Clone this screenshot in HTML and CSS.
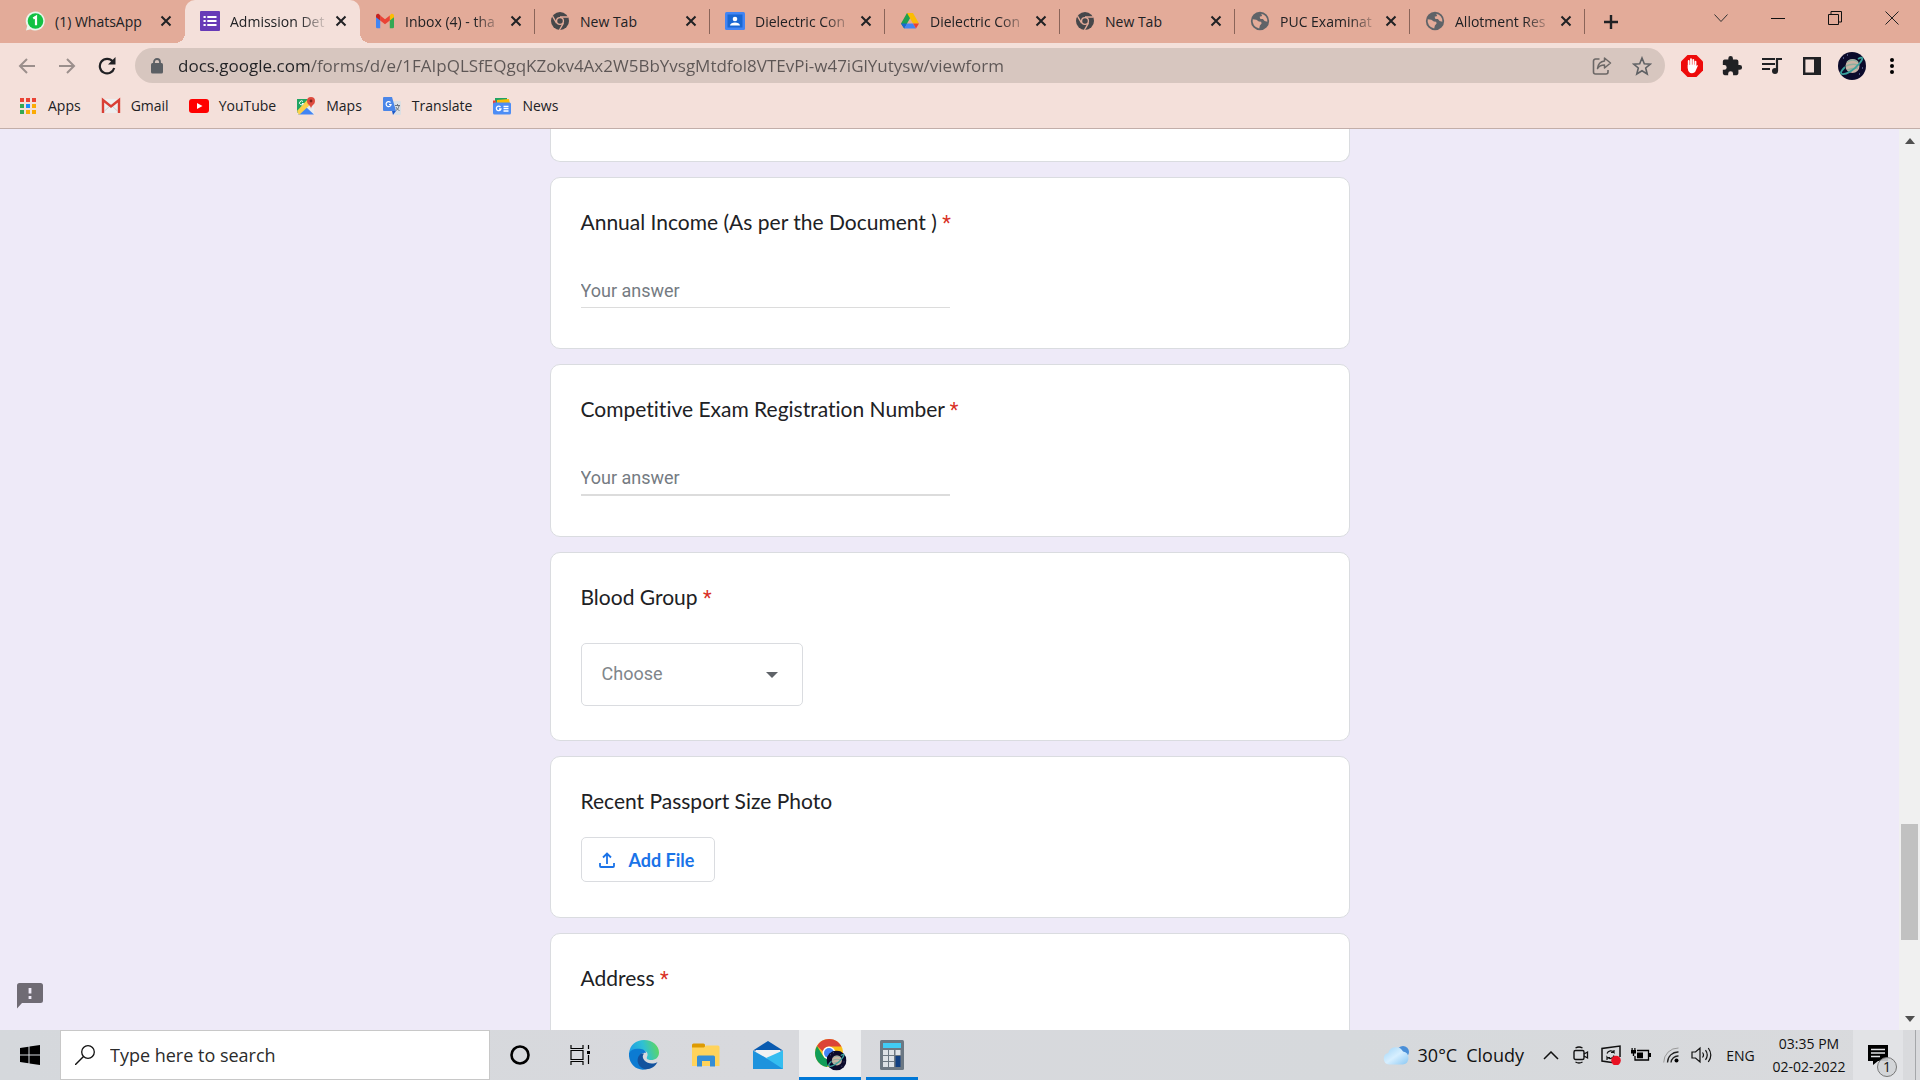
FILE: index.html
```
<!DOCTYPE html>
<html lang="en">
<head>
<meta charset="utf-8">
<title>Admission Details</title>
<meta name="viewport" content="width=device-width, initial-scale=1">
<link rel="stylesheet" href="styles.css">
</head>
<body>
<svg class="defs" aria-hidden="true">
  <defs>
    <symbol id="close" viewBox="0 0 12 12"><path d="M1.500 1.500l9 9M10.500 1.500l-9 9" stroke="#202124" stroke-width="2" fill="none"/></symbol>
    <symbol id="chrome-grey" viewBox="0 0 20 20"><circle cx="10" cy="10" r="10" fill="#46474a"/><circle cx="10" cy="10" r="3.800" fill="none" stroke="#e3ab99" stroke-width="1.500"/><path d="M10 5.500h9M6.200 12.300L1.700 4.600M13.800 12.300L9.400 20" stroke="#e3ab99" stroke-width="1.500"/></symbol>
    <symbol id="globe" viewBox="0 0 24 24"><path fill="#5f6368" d="M12 1a11 11 0 1 0 0 22 11 11 0 0 0 0-22zm-1 19.900A9 9 0 0 1 3.300 10l4.300 0.500 3 2 2.800 0.500 0.500 2-2 2.500zM20.800 13l-3.300-1-2-2.500-3 0-1-2.500 3-1-1-2.800a9 9 0 0 1 7.300 9.800z"/></symbol>
    <symbol id="planet" viewBox="0 0 28 28"><circle cx="14" cy="14" r="14" fill="#0b0a2b"/><circle cx="14.500" cy="14" r="7" fill="#c9b3a4"/><path d="M9 10q6-4 11 0M8 14q6-3 12-1M9 18q6-2 11-2" stroke="#8fae9f" stroke-width="1.500" fill="none"/><path d="M20 7c5-3 6-1 1 5s-13 11-17 10c-2-1-1-3 3-7" fill="none" stroke="#39a09c" stroke-width="1.800"/><path d="M5 6h1M21 22h1M9 3h1M24 16h1" stroke="#8b9bd0"/></symbol>
  </defs>
</svg>

<header class="browser">
  <div class="tabstrip">
    <div class="tabs" role="tablist">
      <div class="tab tab--plain" role="tab">
        <svg class="favicon" viewBox="0 0 20 20"><path d="M1 19.500L2.200 15A9.500 9.500 0 1 1 5.500 18.200z" fill="#e8f7ec"/><circle cx="10.500" cy="10" r="7.800" fill="#12c143"/><path d="M8.300 7.500l2.700-1.800v8.600" stroke="#fff" stroke-width="2.200" fill="none"/></svg>
        <span class="tab-title">(1) WhatsApp</span><button class="tab-close" aria-label="Close tab"><svg><use href="#close"/></svg></button>
      </div>
      <div class="tab tab--active" role="tab" aria-selected="true">
        <svg class="favicon" viewBox="0 0 20 20"><rect width="20" height="20" rx="1" fill="#673ab7"/><path d="M3.500 6h2.200M7.300 6h9.200M3.500 10h2.200M7.300 10h9.200M3.500 14h2.200M7.300 14h9.200" stroke="#fff" stroke-width="2"/></svg>
        <span class="tab-title">Admission Det</span><button class="tab-close" aria-label="Close tab"><svg><use href="#close"/></svg></button>
      </div>
      <div class="tab" role="tab">
        <svg class="favicon" viewBox="0 0 20 20"><path d="M1 5.500v10.500q0 1.300 1.300 1.300h2.900V8.500z" fill="#4285f4"/><path d="M14.800 8.500v8.800h2.900q1.300 0 1.300-1.300V5.500z" fill="#34a853"/><path d="M14.800 4.500v5L19 6.300V4.800c0-1.800-2-2.500-3.200-1.500z" fill="#fbbc04"/><path d="M5.200 9.500v-5L10 8.200l4.800-3.700v5L10 13.200z" fill="#ea4335"/><path d="M1 4.800v1.500l4.200 3.200v-5L4.200 3.300C3 2.300 1 3 1 4.800z" fill="#c5221f"/></svg>
        <span class="tab-title">Inbox (4) - tha</span><button class="tab-close" aria-label="Close tab"><svg><use href="#close"/></svg></button>
      </div>
      <div class="tab tab--plain" role="tab">
        <svg class="favicon favicon--small"><use href="#chrome-grey"/></svg>
        <span class="tab-title">New Tab</span><button class="tab-close" aria-label="Close tab"><svg><use href="#close"/></svg></button>
      </div>
      <div class="tab" role="tab">
        <svg class="favicon" viewBox="0 0 20 20"><rect y="1" width="20" height="18" rx="1.500" fill="#4285f4"/><rect x="2.500" y="3.500" width="15" height="13" fill="#1a67d2"/><circle cx="10" cy="8" r="2.300" fill="#fff"/><path d="M5 14.500c0-4 10-4 10 0z" fill="#fff"/></svg>
        <span class="tab-title">Dielectric Con</span><button class="tab-close" aria-label="Close tab"><svg><use href="#close"/></svg></button>
      </div>
      <div class="tab" role="tab">
        <svg class="favicon" viewBox="0 0 20 20"><path d="M7 2h6L10 7.200 4.200 17.500 1 12.500z" fill="#1ea04f"/><path d="M7 2h6l6 10.500h-6z" fill="#fbbc04"/><path d="M1 12.500h6.200l-3 5z" fill="#1967d2"/><path d="M7.200 12.500h5.800l3 5H4.200z" fill="#4285f4"/><path d="M13 12.500h6l-3 5z" fill="#ea4335"/></svg>
        <span class="tab-title">Dielectric Con</span><button class="tab-close" aria-label="Close tab"><svg><use href="#close"/></svg></button>
      </div>
      <div class="tab tab--plain" role="tab">
        <svg class="favicon favicon--small"><use href="#chrome-grey"/></svg>
        <span class="tab-title">New Tab</span><button class="tab-close" aria-label="Close tab"><svg><use href="#close"/></svg></button>
      </div>
      <div class="tab" role="tab">
        <svg class="favicon"><use href="#globe"/></svg>
        <span class="tab-title">PUC Examinat</span><button class="tab-close" aria-label="Close tab"><svg><use href="#close"/></svg></button>
      </div>
      <div class="tab" role="tab">
        <svg class="favicon"><use href="#globe"/></svg>
        <span class="tab-title">Allotment Res</span><button class="tab-close" aria-label="Close tab"><svg><use href="#close"/></svg></button>
      </div>
    </div>
    <button class="new-tab" aria-label="New tab"><svg width="16" height="16" viewBox="0 0 16 16"><path d="M8 1v14M1 8h14" stroke="#202124" stroke-width="2.400"/></svg></button>
    <div class="window-controls">
      <button aria-label="Search tabs"><svg width="14" height="14" viewBox="0 0 14 14"><path d="M.5 3.500L7 10.500l6.500-7" fill="none" stroke="#333"/></svg></button>
      <button aria-label="Minimize"><svg width="14" height="14" viewBox="0 0 14 14"><path d="M0 7.500h14" stroke="#111"/></svg></button>
      <button aria-label="Restore"><svg width="14" height="14" viewBox="0 0 14 14"><path d="M.5 3.500h10v10h-10zM3 3V.5h10.500v10.500H11" fill="none" stroke="#111"/></svg></button>
      <button aria-label="Close"><svg width="14" height="14" viewBox="0 0 14 14"><path d="M.5.500l13 13M13.500.500l-13 13" stroke="#222"/></svg></button>
    </div>
  </div>

  <div class="toolbar">
    <button class="tool" aria-label="Back"><svg width="18" height="18" viewBox="0 0 18 18"><path d="M17 9H2M9 2L2 9l7 7" fill="none" stroke="#9b8f8c" stroke-width="2"/></svg></button>
    <button class="tool" aria-label="Forward"><svg width="18" height="18" viewBox="0 0 18 18"><path d="M1 9h15M9 2l7 7-7 7" fill="none" stroke="#9b8f8c" stroke-width="2"/></svg></button>
    <button class="tool" aria-label="Reload"><svg width="18" height="18" viewBox="0 0 18 18"><path d="M14.800 4.500A7.300 7.300 0 1 0 16.200 11" fill="none" stroke="#202124" stroke-width="2.200"/><path d="M17.500 0v7.500H10z" fill="#202124"/></svg></button>
    <div class="omnibox">
      <svg class="lock" width="12" height="16" viewBox="0 0 12 16"><rect y="5" width="12" height="10.500" rx="1.500" fill="#5b5f64"/><path d="M3 6V4a3 3 0 0 1 6 0v2" fill="none" stroke="#5b5f64" stroke-width="1.800"/></svg>
      <input class="url" type="text" aria-label="Address and search bar" value="docs.google.com/forms/d/e/1FAIpQLSfEQgqKZokv4Ax2W5BbYvsgMtdfol8VTEvPi-w47iGlYutysw/viewform">
      <button class="tool" aria-label="Share this page"><svg width="20" height="18" viewBox="0 0 20 18"><path d="M7.500 2H3.500a2 2 0 0 0-2 2v11a2 2 0 0 0 2 2h10.500a2 2 0 0 0 2-2v-2" fill="none" stroke="#6b6766" stroke-width="1.600"/><path d="M12.500 1l6 5-6 5V8C9 8 7 9 5.500 11.500 6 7 8.500 4.500 12.500 4z" fill="none" stroke="#6b6766" stroke-width="1.500" stroke-linejoin="round"/></svg></button>
      <button class="tool" aria-label="Bookmark this page"><svg width="20" height="20" viewBox="0 0 20 20"><path d="M10 2l2.300 5.700 6.100.4-4.700 3.900 1.500 6L10 14.700 4.800 18l1.500-6L1.600 8.100l6.100-.4z" fill="none" stroke="#5f6164" stroke-width="1.600"/></svg></button>
    </div>
    <button class="tool" aria-label="AdBlock"><svg width="22" height="22" viewBox="0 0 22 22"><path d="M6.500 0h9L22 6.500v9L15.500 22h-9L0 15.500v-9z" fill="#ee0b0b"/><path d="M7.700 13V6M10 11V4.200M12.300 11V4.800M14.500 12V6.700" stroke="#fff" stroke-width="1.800" stroke-linecap="round"/><path d="M6.800 10v3.500c0 6 7 6 8.200 1.500l2-4.500c-1-1-2 .5-2.500 1l-1-2z" fill="#fff"/></svg></button>
    <button class="tool" aria-label="Extensions"><svg width="22" height="22" viewBox="0 0 24 24"><path fill="#202124" d="M20.500 11H19V7a2 2 0 0 0-2-2h-4V3.500a2.500 2.500 0 0 0-5 0V5H4a2 2 0 0 0-2 2v3.800h1.500a2.700 2.700 0 0 1 0 5.400H2V20a2 2 0 0 0 2 2h3.800v-1.500a2.700 2.700 0 0 1 5.400 0V22H17a2 2 0 0 0 2-2v-4h1.500a2.500 2.500 0 0 0 0-5z"/></svg></button>
    <button class="tool" aria-label="Media controls"><svg width="20" height="18" viewBox="0 0 20 18"><path d="M0 2h13M0 7h13M0 12h8" stroke="#202124" stroke-width="2"/><path d="M15 14V2h5" stroke="#202124" stroke-width="2.200" fill="none"/><circle cx="13" cy="14" r="3" fill="#202124"/></svg></button>
    <button class="tool" aria-label="Side panel"><svg width="18" height="18" viewBox="0 0 18 18"><path d="M1.200 1.200h15.600v15.600H1.200z" fill="none" stroke="#202124" stroke-width="2.400"/><path d="M11 1h6v16h-6z" fill="#202124"/></svg></button>
    <button class="tool" aria-label="Profile"><svg width="28" height="28"><use href="#planet"/></svg></button>
    <button class="tool" aria-label="Menu"><svg width="4" height="16" viewBox="0 0 4 16"><circle cx="2" cy="2" r="2"/><circle cx="2" cy="8" r="2"/><circle cx="2" cy="14" r="2"/></svg></button>
  </div>

  <nav class="bookmarks" aria-label="Bookmarks">
    <a href="#"><svg viewBox="0 0 20 20"><path d="M2 2h4v4H2zM8 2h4v4H8zM14 2h4v4h-4z" fill="#ea4335"/><path d="M2 8h4v4H2zM2 14h4v4H2z" fill="#34a853"/><path d="M8 8h4v4H8z" fill="#1a8cff"/><path d="M8 14h4v4H8zM14 8h4v4h-4zM14 14h4v4h-4z" fill="#fbab05"/></svg>Apps</a>
    <a href="#"><svg viewBox="0 0 20 20"><rect x="1" y="3" width="18" height="14" rx="1" fill="#eee"/><path d="M3.500 15L10 9l6.500 6" fill="none" stroke="#ccc"/><path d="M2 17V4l8 6.500L18 4v13" fill="none" stroke="#d93f35" stroke-width="2.400"/></svg>Gmail</a>
    <a href="#"><svg viewBox="0 0 20 20"><rect y="3" width="20" height="14" rx="3" fill="#f00"/><path d="M8 7l5.500 3L8 13z" fill="#fff"/></svg>YouTube</a>
    <a href="#"><svg viewBox="0 0 20 20"><path d="M1 3h12L1 17z" fill="#1fa463"/><path d="M1 18L15 4l3 3v11z" fill="#e8eaed"/><path d="M2 18.500L10 11l8 7.500z" fill="#4285f4"/><path d="M1 15L12 3l4 4L3 19z" fill="#fbd04a"/><path d="M1 3h10L1 13z" fill="#1fa463"/><path d="M15 13c0-4-4-4-4-8a4 4 0 0 1 8 0c0 4-4 4-4 8z" fill="#dd4b3e"/><circle cx="15" cy="5" r="1.400" fill="#7d231b"/><path d="M7 5.500a2 2 0 1 0 .5 2H6" stroke="#fff" fill="none"/></svg>Maps</a>
    <a href="#"><svg viewBox="0 0 20 20"><path d="M8 5h10q1 0 1 1v12q0 1-1 1h-5z" fill="#dcdfe3"/><path d="M2 1h8l4 14H2q-1 0-1-1V2q0-1 1-1z" fill="#4a86e8"/><path d="M10 15h4l-3 4z" fill="#1b58c9"/><path d="M8.500 6.500a2.500 2.500 0 1 0 .6 2H7" stroke="#fff" stroke-width="1.200" fill="none"/><path d="M13 9.500h5M15.500 8v1.500M17 10c-.5 2.500-2 4-3 4.500M14 11c.5 1.500 2 3 3.500 3.500" stroke="#6b7580" fill="none"/></svg>Translate</a>
    <a href="#"><svg viewBox="0 0 20 20"><path d="M3 2h12v5H3z" fill="#1fa463"/><path d="M5 4l12-1 1 5H5z" fill="#fbbc04"/><path d="M1 4.500l3 0v4H1z" fill="#ea4335"/><rect x="1" y="6.500" width="18" height="12" rx="1.500" fill="#4d8df5"/><path d="M8.500 11a2.300 2.300 0 1 0 .4 2H7M11.500 10.500h5M11.500 12.700h5M11.500 15h5" stroke="#fff" stroke-width="1.300" fill="none"/></svg>News</a>
  </nav>
</header>

<div class="viewport">
  <main class="page">
    <form class="form">
      <section class="card card--cut"></section>
      <section class="card">
        <label class="question" for="income">Annual Income (As per the Document ) <span class="required">*</span></label>
        <input class="answer" id="income" type="text" placeholder="Your answer">
      </section>
      <section class="card">
        <label class="question" for="exam">Competitive Exam Registration Number <span class="required">*</span></label>
        <input class="answer answer--thick" id="exam" type="text" placeholder="Your answer">
      </section>
      <section class="card">
        <label class="question" for="blood">Blood Group <span class="required">*</span></label>
        <div class="dropdown">
          <select id="blood"><option>Choose</option></select>
          <svg width="12" height="6" viewBox="0 0 12 6"><path d="M0 0h12L6 6z" fill="#5f6368"/></svg>
        </div>
      </section>
      <section class="card">
        <div class="question">Recent Passport Size Photo</div>
        <button class="add-file" type="button"><svg width="16" height="16" viewBox="0 0 16 16"><path d="M8 12V2M4 5.500l4-4 4 4M1 11v3q0 1 1 1h12q1 0 1-1v-3" fill="none" stroke="#1a73e8" stroke-width="1.800"/></svg>Add File</button>
      </section>
      <section class="card">
        <label class="question" for="address">Address <span class="required">*</span></label>
        <input class="answer" id="address" type="text" placeholder="Your answer">
      </section>
    </form>
    <button class="report" aria-label="Report a problem"><svg width="26" height="26" viewBox="0 0 26 26"><path d="M2.500 0h21A2.500 2.500 0 0 1 26 2.500v15a2.500 2.500 0 0 1-2.500 2.500H5l-5 5.500v-23A2.500 2.500 0 0 1 2.500 0z" fill="#6f6b74"/><path d="M13 5v5.500M13 13v3" stroke="#f0ebf8" stroke-width="2.800"/></svg></button>
  </main>
  <div class="scrollbar" aria-hidden="true">
    <svg width="10" height="6" viewBox="0 0 10 6"><path d="M0 6L5 0l5 6z" fill="#505050"/></svg>
    <div class="track"><div class="thumb"></div></div>
    <svg width="10" height="6" viewBox="0 0 10 6"><path d="M0 0h10L5 6z" fill="#505050"/></svg>
  </div>
</div>

<footer class="taskbar">
  <button class="start" aria-label="Start"><svg width="20" height="20" viewBox="0 0 20 20"><path d="M0 3l8.500-1.200v7.700H0zM9.500 1.600L20 0v9.500H9.500zM0 10.500h8.500v7.700L0 17zM9.500 10.500H20V20L9.500 18.400z"/></svg></button>
  <label class="search">
    <svg width="20" height="20" viewBox="0 0 20 20"><circle cx="13" cy="7" r="6.300" fill="none" stroke="#111" stroke-width="1.300"/><path d="M8.500 11.500L0 20" stroke="#111" stroke-width="1.400"/></svg>
    <input type="text" placeholder="Type here to search" aria-label="Search Windows">
  </label>
  <div class="shell">
    <button aria-label="Cortana"><svg width="20" height="20" viewBox="0 0 20 20"><circle cx="10" cy="10" r="8.500" fill="none" stroke="#000" stroke-width="2.600"/></svg></button>
    <button aria-label="Task view"><svg width="20" height="20" viewBox="0 0 20 20"><path d="M1 0v3.500h12V0M1 20v-3.500h12V20M1 5.500h12v9H1zM18.500 0v4M18.500 10v9" fill="none" stroke="#000" stroke-width="1.200"/><path d="M17 6h3v3h-3z"/></svg></button>
  </div>
  <div class="apps">
    <button aria-label="Microsoft Edge"><svg width="30" height="30" viewBox="0 0 30 30">
      <defs><linearGradient id="eg" x1="0" y1=".5" x2="1" y2=".3"><stop offset="0" stop-color="#1e9de4"/><stop offset=".5" stop-color="#2fc0d4"/><stop offset="1" stop-color="#62d85a"/></linearGradient></defs>
      <path d="M0 13C1 5 7 0 15 0c9 0 15 6 15 12.500 0 5-3.500 7.500-8 7.500-3 0-5-1-4-3 2-4-1-7-6-7-6 0-10 2-12 3z" fill="url(#eg)"/>
      <path d="M0 13C2 9 7 8 12 9c3 .6 5 2 5 4-4-1-8 3-7 8 .8 4 4 7 8 8C8 32-1 24 0 13z" fill="#0c7bd2"/>
      <path d="M12 13.500c-5 4-5 12 3 15.500 6 1 11-2 13.500-7-4 2.500-10 2-13-1.500-2-2.300-2.500-4.500-.5-7z" fill="#12529e"/></svg></button>
    <button aria-label="File Explorer"><svg width="28" height="24" viewBox="0 0 28 24"><path d="M0 2q0-1.500 1.500-1.500h10q1.500 0 1.500 1.500v3H0z" fill="#dd9a02"/><path d="M0 4.500h12l2-2h12q1.500 0 1.500 1.500v19H0z" fill="#ffd35b"/><path d="M5 23.500V14q0-1.500 1.500-1.500h15Q23 12.500 23 14v9.500h-5V18h-8v5.500z" fill="#358ed6"/></svg></button>
    <button aria-label="Mail"><svg width="30" height="28" viewBox="0 0 30 28"><path d="M0 9.500L15 0l15 9.500z" fill="#0a5bb0"/><path d="M3 9h24v10H3z" fill="#f2f2f2"/><path d="M0 9.500L15 18 30 9.500V28H0z" fill="#1e93dd"/><path d="M13 17L30 9.500V28z" fill="#35bdf0"/></svg></button>
    <button class="running focused" aria-label="Google Chrome"><svg width="32" height="32" viewBox="0 0 32 32"><circle cx="14" cy="14" r="14" fill="#fbc116"/><path d="M2 7A14 14 0 0 1 26.500 7.500H14a6.500 6.500 0 0 0-6 5z" fill="#dc4437"/><path d="M2 7a14 14 0 0 0 10 21l5-8c-4 1-8-1-9.500-4z" fill="#109d58"/><circle cx="14" cy="14" r="6.500" fill="#fff"/><circle cx="14" cy="14" r="5" fill="#4285f4"/><use href="#planet" x="11.500" y="11.500" width="20" height="20"/></svg></button>
    <button class="running" aria-label="Calculator"><svg width="24" height="30" viewBox="0 0 24 30"><rect width="24" height="30" rx="1.500" fill="#6c7883"/><path d="M3 3h18v5H3z" fill="#41ccf5"/><path d="M3 10h5v5H3zM9 10h5v5H9zM15.500 10h5v5h-5zM3 16h5v5H3zM9 16h5v5H9zM3 22h5v5H3zM9 22h5v5H9z" fill="#dde2e7"/><path d="M15.500 16h5v11h-5z" fill="#103f82"/></svg></button>
  </div>
  <div class="tray">
    <button class="weather"><svg width="26" height="20" viewBox="0 0 26 20"><defs><linearGradient id="cg" x1="0" y1="0" x2="1" y2="1"><stop offset="0" stop-color="#9fd4f7"/><stop offset=".5" stop-color="#d7efff"/><stop offset="1" stop-color="#89c7f3"/></linearGradient></defs><circle cx="20" cy="7" r="6" fill="#4a8fd8"/><path d="M6 19.500a5.800 5.800 0 0 1-.8-11.400A8 8 0 0 1 20 6.500a6.600 6.600 0 0 1 0 13z" fill="url(#cg)"/></svg><span>30°C</span><span>Cloudy</span></button>
    <button class="tray-icon" aria-label="Show hidden icons"><svg width="16" height="9" viewBox="0 0 16 9"><path d="M1 8l7-7 7 7" fill="none" stroke="#111" stroke-width="1.500"/></svg></button>
    <button class="tray-icon" aria-label="Meet now"><svg width="16" height="18" viewBox="0 0 16 18"><rect x="1" y="4.500" width="10" height="9" rx="1.500" fill="none" stroke="#111" stroke-width="1.400"/><path d="M11 8l3.500-2v6L11 10M2.500 2Q6 0 9.500 2M2.500 16q3.500 2 7 0" fill="none" stroke="#111" stroke-width="1.300"/></svg></button>
    <button class="tray-icon" aria-label="Windows Update"><svg width="20" height="20" viewBox="0 0 20 20"><path d="M11 17.500L1 16V3.500L19 1v11" fill="none" stroke="#111" stroke-width="1.500"/><path d="M6 8.500a4 4 0 0 1 7-1V5M13 7.500h-3M13 10.500a4 4 0 0 1-7 1.500v3M6 12.500h3" fill="none" stroke="#111" stroke-width="1.200"/><circle cx="15" cy="15.500" r="4.800" fill="#e81123"/></svg></button>
    <button class="tray-icon" aria-label="Battery"><svg width="20" height="14" viewBox="0 0 20 14"><path d="M6 2.500h11.500v9.500H4V8" fill="none" stroke="#000" stroke-width="1.300"/><path d="M6 4.500h6v5.700H6zM18 5h2v4h-2zM0 2h5v3.500H3.200V8H1.800V5.500H0zM.5 0h1.200v2H.5zM3.300 0h1.200v2H3.300z"/></svg></button>
    <button class="tray-icon" aria-label="Network"><svg width="16" height="16" viewBox="0 0 16 16"><path d="M.7 15.500A14.500 14.500 0 0 1 15.500 1" fill="none" stroke="#999"/><path d="M4.500 15.500A10.500 10.500 0 0 1 15.500 5M8 15.500A7 7 0 0 1 15.500 9" fill="none" stroke="#222" stroke-width="1.300"/><circle cx="13.500" cy="13.500" r="2"/></svg></button>
    <button class="tray-icon" aria-label="Volume"><svg width="21" height="18" viewBox="0 0 21 18"><path d="M1 6h3.500L9 2v14l-4.500-4H1zM11.500 6.500q2 2.500 0 5M14.500 4.200q3.500 4.800 0 9.600M17.300 2q5 7 0 14" fill="none" stroke="#111" stroke-width="1.200"/></svg></button>
    <button class="lang">ENG</button>
    <button class="clock"><span>03:35 PM</span><span>02-02-2022</span></button>
    <button class="notifications" aria-label="Notifications"><svg width="20" height="20" viewBox="0 0 20 20"><path d="M0 0h20v16H10l-5 4v-4H0z"/><path d="M3 4.500h14M3 8h14M3 11.500h9" stroke="#e2e3e6" stroke-width="1.500"/></svg><span class="badge">1</span></button>
    <div class="show-desktop"></div>
  </div>
</footer>
</body>
</html>
```
FILE: styles.css
```
* { box-sizing: border-box; }

body {
  margin: 0;
  height: 100vh;
  display: flex;
  flex-direction: column;
  overflow: hidden;
  font-family: "Open Sans", "Noto Sans", sans-serif;
  color: #202124;
}

button {
  border: 0;
  padding: 0;
  background: none;
  font: inherit;
  color: inherit;
  display: flex;
  align-items: center;
  justify-content: center;
}

input { font: inherit; border: 0; outline: 0; background: none; padding: 0; min-width: 0; }
svg { display: block; flex: none; }
.defs { position: absolute; width: 0; height: 0; }

/* Browser frame */
.browser { flex: none; background: #f4e0da; border-bottom: 1px solid #c2aea9; }
.tabstrip { display: flex; height: 43px; background: #e3ab99; padding-left: 10px; }
.tabs { display: flex; flex: 0 1 1575px; min-width: 0; }
.tab {
  position: relative;
  flex: 1;
  min-width: 0;
  display: flex;
  align-items: center;
  gap: 10px;
  padding: 0 13px 1px 15px;
  font-size: 14px;
}
.tab:nth-child(n+3)::after {
  content: "";
  position: absolute;
  right: 0;
  top: 9px;
  width: 1px;
  height: 25px;
  background: #8a6459;
}
.tab--active { background: #f4e0da; border-radius: 10px 10px 0 0; }
.tab--active::before,
.tab--active::after {
  content: "";
  position: absolute;
  bottom: 0;
  width: 10px;
  height: 10px;
}
.tab--active::before { left: -10px; background: radial-gradient(circle at 0 0, transparent 10px, #f4e0da 10px); }
.tab--active::after { right: -10px; background: radial-gradient(circle at 100% 0, transparent 10px, #f4e0da 10px); }
.favicon { width: 20px; height: 20px; }
.favicon--small { padding: 1px; }
.tab-title {
  flex: 1;
  min-width: 0;
  margin-right: -4px;
  overflow: hidden;
  white-space: nowrap;
  mask-image: linear-gradient(to right, #000 70%, transparent 100%);
}
.tab--plain .tab-title { mask-image: none; }
.tab-close svg { width: 12px; height: 12px; }
.new-tab { width: 30px; margin-left: 11px; }
.window-controls { display: flex; height: 36px; margin-left: auto; }
.window-controls button { width: 57px; }

.toolbar { display: flex; align-items: center; height: 45px; padding: 0 8px 0 7px; }
.tool { width: 40px; height: 35px; flex: none; }
.omnibox {
  flex: 1;
  min-width: 0;
  display: flex;
  align-items: center;
  height: 35px;
  margin: 0 7px 0 8px;
  padding: 0 3px 0 16px;
  border-radius: 18px;
  background: #d7c6bf;
}
.url {
  flex: 1;
  margin-left: 15px;
  font-size: 17px;
  background: linear-gradient(to right, #202124 133px, #5d5655 133px);
  background-clip: text;
  -webkit-text-fill-color: transparent;
}

.bookmarks { display: flex; align-items: center; gap: 20px; height: 40px; padding: 0 18px 5px; font-size: 14px; }
.bookmarks a { display: flex; align-items: center; gap: 10px; color: inherit; text-decoration: none; }
.bookmarks svg { width: 20px; height: 20px; }

/* Page */
.viewport { flex: 1; min-height: 0; display: flex; background: #eeeaf8; }
.page { position: relative; flex: 1; min-width: 0; overflow: hidden; }
.form { display: flex; flex-direction: column; gap: 15px; max-width: 800px; margin: 0 auto; }
.card {
  display: flex;
  flex-direction: column;
  align-items: flex-start;
  background: #fff;
  border: 1px solid #dadce0;
  border-radius: 10px;
  padding: 29px 30px 30px;
}
.card--cut { height: 33px; padding: 0; border-top: 0; border-radius: 0 0 10px 10px; }
.question { font-family: Lato, "Open Sans", sans-serif; font-size: 21px; line-height: 30px; font-variant-ligatures: none; }
.required { color: #d93025; font-family: Roboto, sans-serif; font-size: 20px; line-height: 20px; }
.answer {
  width: 50%;
  height: 31px;
  margin: 40px 0 10px;
  padding-bottom: 4px;
  border-bottom: 1px solid #dcdcdc;
  font-family: Roboto, sans-serif;
  font-size: 18px;
}
.answer--thick { border-bottom-width: 2px; height: 32px; }
.answer::placeholder { color: #757b82; opacity: 1; }
.dropdown { display: grid; align-items: center; width: 222px; height: 63px; margin: 31px 0 4px; }
.dropdown select {
  grid-area: 1 / 1;
  appearance: none;
  width: 100%;
  height: 100%;
  padding: 0 20px 2px;
  border: 1px solid #dadce0;
  border-radius: 5px;
  background: #fff;
  color: #80868b;
  font-family: Roboto, sans-serif;
  font-size: 18px;
}
.dropdown svg { grid-area: 1 / 1; justify-self: end; margin-right: 25px; pointer-events: none; }
.add-file {
  gap: 14px;
  height: 45px;
  margin: 21px 0 5px;
  padding: 0 20px 0 17px;
  border: 1px solid #dadce0;
  border-radius: 5px;
  color: #1a73e8;
  font-family: Lato, "Open Sans", sans-serif;
  font-size: 18px;
  font-weight: 700;
  font-variant-ligatures: none;
}
.report { position: absolute; left: 17px; bottom: 21px; }

.scrollbar { flex: none; width: 21px; display: flex; flex-direction: column; align-items: center; padding: 9px 0 8px; background: #f0f0f0; }
.track { flex: 1; width: 17px; display: flex; flex-direction: column; justify-content: flex-end; }
.thumb { height: 116px; margin-bottom: 76px; background: #c1c1c1; }

/* Taskbar */
.taskbar { flex: none; display: flex; height: 50px; background: linear-gradient(to right, #d5d8dc, #d8d9dd 40%, #d6d9dc 70%, #d9dadd); color: #111; }
.start { width: 60px; }
.search {
  display: flex;
  align-items: center;
  gap: 15px;
  width: 430px;
  padding: 0 14px;
  border: 1px solid #c8c8c8;
  background: #fff;
  font-size: 18px;
}
.search input { flex: 1; }
.search input::placeholder { color: #2b2b2b; opacity: 1; }
.shell, .apps { display: flex; }
.shell button { width: 60px; }
.apps { margin-left: 3px; }
.apps button { width: 62px; }
.running { position: relative; }
.running::after { content: ""; position: absolute; left: 5px; right: 5px; bottom: 0; height: 3px; background: #0078d7; }
.apps .focused { background: #eeeff1; padding-left: 2px; }
.focused::after { left: 0; right: 0; }

.tray { display: flex; margin-left: auto; }
.weather { gap: 9px; margin-right: 12px; font-size: 18px; }
.tray-icon { width: 30px; }
.lang { width: 49px; font-size: 14px; }
.clock { width: 88px; flex-direction: column; font-size: 14px; line-height: 23px; }
.notifications { position: relative; width: 50px; background: #e2e3e6; }
.badge {
  position: absolute;
  left: 24px;
  bottom: 3px;
  width: 20px;
  height: 20px;
  border: 1px solid #777;
  border-radius: 50%;
  background: rgba(210, 211, 214, 0.9);
  font-size: 14px;
  line-height: 18px;
  text-align: center;
}
.show-desktop { width: 5px; margin-left: 12px; border-left: 1px solid #a5a7aa; }
```
